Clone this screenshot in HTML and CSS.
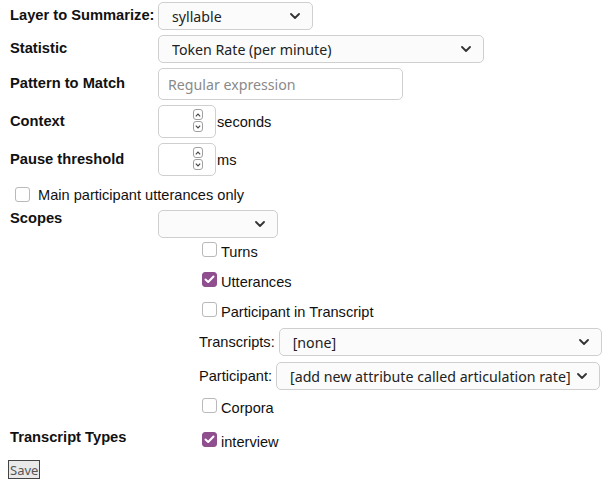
FILE: index.html
```html
<!DOCTYPE html>
<html>
<head>
<meta charset="utf-8">
<link rel="stylesheet" href="styles.css">
</head>
<body>
<form class="form">
  <div class="row">
    <label class="label">Layer to Summarize:</label>
    <select class="select w-layer"><option>syllable</option></select>
  </div>
  <div class="row">
    <label class="label">Statistic</label>
    <select class="select w-stat"><option>Token Rate (per minute)</option></select>
  </div>
  <div class="row">
    <label class="label">Pattern to Match</label>
    <input class="text-input" type="text" placeholder="Regular expression">
  </div>
  <div class="row">
    <label class="label">Context</label>
    <div class="num">
      <input class="num-input" type="number">
      <span class="spin">
        <span class="spin-btn"><svg width="6" height="4" viewBox="0 0 6 4"><path d="M0.8 3.3 L3 1 L5.2 3.3" fill="none" stroke="#444" stroke-width="1.1"/></svg></span>
        <span class="spin-btn"><svg width="6" height="4" viewBox="0 0 6 4"><path d="M0.8 0.7 L3 3 L5.2 0.7" fill="none" stroke="#444" stroke-width="1.1"/></svg></span>
      </span>
    </div>
    <span class="unit">seconds</span>
  </div>
  <div class="row">
    <label class="label">Pause threshold</label>
    <div class="num">
      <input class="num-input" type="number">
      <span class="spin">
        <span class="spin-btn"><svg width="6" height="4" viewBox="0 0 6 4"><path d="M0.8 3.3 L3 1 L5.2 3.3" fill="none" stroke="#444" stroke-width="1.1"/></svg></span>
        <span class="spin-btn"><svg width="6" height="4" viewBox="0 0 6 4"><path d="M0.8 0.7 L3 3 L5.2 0.7" fill="none" stroke="#444" stroke-width="1.1"/></svg></span>
      </span>
    </div>
    <span class="unit">ms</span>
  </div>
  <label class="main-check"><input class="cb" type="checkbox"><span>Main participant utterances only</span></label>
  <div class="row row-top scopes-row">
    <label class="label label-scopes">Scopes</label>
    <div class="scopes">
      <select class="select w-scope"><option></option></select>
      <div class="sublist">
        <label class="check"><input class="cb" type="checkbox"><span>Turns</span></label>
        <label class="check"><input class="cb" type="checkbox" checked><span>Utterances</span></label>
        <label class="check"><input class="cb" type="checkbox"><span>Participant in Transcript</span></label>
        <div class="attr-row attr-transcripts">
          <span class="attr-label">Transcripts:</span>
          <select class="select attr-select"><option>[none]</option></select>
        </div>
        <div class="attr-row attr-participant">
          <span class="attr-label">Participant:</span>
          <select class="select attr-select"><option>[add new attribute called articulation rate]</option></select>
        </div>
        <label class="check check-corpora"><input class="cb" type="checkbox"><span>Corpora</span></label>
      </div>
    </div>
  </div>
  <div class="row row-top types-row">
    <label class="label label-types">Transcript Types</label>
    <div class="types">
      <label class="check"><input class="cb" type="checkbox" checked><span>interview</span></label>
    </div>
  </div>
  <div class="actions">
    <button class="save" type="button">Save</button>
  </div>
</form>
</body>
</html>
```
FILE: styles.css
```css
html, body {
  margin: 0;
  padding: 0;
  background: #fff;
}
body {
  font-family: "Liberation Sans", Arial, sans-serif;
  font-size: 14.6px;
  color: #111;
}
.form {
  display: flex;
  flex-direction: column;
  padding: 2px 8px 0 8px;
}
.row {
  display: flex;
  align-items: center;
}
.row + .row {
  margin-top: 5px;
}
.row-top {
  align-items: flex-start;
}
.label {
  width: 150px;
  padding-left: 2px;
  box-sizing: border-box;
  font-weight: bold;
  font-size: 14.7px;
  padding-bottom: 2px;
  flex: none;
}
.select {
  appearance: none;
  -webkit-appearance: none;
  height: 28px;
  box-sizing: border-box;
  border: 1px solid #cfcfcf;
  border-radius: 5px;
  background-color: #fbfbfb;
  background-image: url("data:image/svg+xml,%3Csvg xmlns='http://www.w3.org/2000/svg' width='10' height='6' viewBox='0 0 10 6'%3E%3Cpath d='M1 1 L5 5 L9 1' fill='none' stroke='%23333' stroke-width='1.8' stroke-linecap='round' stroke-linejoin='round'/%3E%3C/svg%3E");
  background-repeat: no-repeat;
  background-position: right 12px center;
  background-size: 10px 6px;
  padding: 0 30px 0 13px;
  font-family: "Noto Sans", sans-serif;
  font-size: 14.2px;
  color: #222;
  margin: 0;
}
.w-layer { width: 155px; }
.w-stat { width: 326px; }
.w-scope { width: 120px; }
.text-input {
  width: 245px;
  height: 32px;
  box-sizing: border-box;
  border: 1px solid #cfcfcf;
  border-radius: 5px;
  padding: 0 9px;
  font-family: "Noto Sans", sans-serif;
  font-size: 14.2px;
  margin: 0;
}
.text-input::placeholder {
  color: #8a8a8a;
}
.num {
  width: 58px;
  height: 33px;
  box-sizing: border-box;
  border: 1px solid #cfcfcf;
  border-radius: 5px;
  display: flex;
  align-items: center;
  background: #fff;
}
.num-input {
  border: none;
  outline: none;
  width: 30px;
  flex: 1;
  min-width: 0;
  background: transparent;
  font-size: 14.4px;
  padding: 0 0 0 6px;
  -moz-appearance: textfield;
}
.num-input::-webkit-inner-spin-button,
.num-input::-webkit-outer-spin-button {
  -webkit-appearance: none;
  margin: 0;
}
.spin {
  display: flex;
  flex-direction: column;
  gap: 1px;
  margin-right: 12px;
  margin-top: -2px;
}
.spin-btn {
  width: 10px;
  height: 11px;
  box-sizing: border-box;
  border: 1px solid #a0a0a0;
  border-radius: 3px;
  display: flex;
  align-items: center;
  justify-content: center;
  background: #fff;
}
.unit {
  margin-left: 1px;
}
.cb {
  appearance: none;
  -webkit-appearance: none;
  width: 15px;
  height: 15px;
  box-sizing: border-box;
  border: 1px solid #b9b9b9;
  border-radius: 3px;
  background: #fff;
  margin: 0;
  flex: none;
}
.cb:checked {
  background-color: #8f4f8f;
  border-color: #8f4f8f;
  background-image: url("data:image/svg+xml,%3Csvg xmlns='http://www.w3.org/2000/svg' width='15' height='15' viewBox='0 0 15 15'%3E%3Cpath d='M3.5 7.5 L6.2 10 L11.5 4.5' fill='none' stroke='%23fff' stroke-width='2' stroke-linecap='round' stroke-linejoin='round'/%3E%3C/svg%3E");
  background-position: center;
  background-repeat: no-repeat;
}
.main-check {
  display: flex;
  align-items: flex-start;
  gap: 8px;
  margin-top: 10px;
  padding-left: 7px;
}
.main-check .cb {
  margin-top: 1px;
}
.main-check span {
  margin-top: 1px;
}
.scopes-row {
  margin-top: 7px;
}
.scopes {
  display: flex;
  flex-direction: column;
}
.sublist {
  display: flex;
  flex-direction: column;
  padding-left: 41px;
  width: 444px;
  box-sizing: border-box;
  margin-top: 4px;
}
.check {
  display: flex;
  align-items: flex-start;
  gap: 4px;
  padding-left: 3px;
}
.check span {
  margin-top: 2px;
}
.check + .check {
  margin-top: 12px;
}
.attr-row {
  display: flex;
  align-items: center;
  gap: 4px;
}
.attr-transcripts {
  margin-top: 8px;
}
.attr-participant {
  margin-top: 6px;
  padding-right: 2px;
}
.attr-select {
  flex: 1;
  min-width: 0;
  padding-right: 22px;
}
.check-corpora {
  margin-top: 8px;
}
.row.types-row {
  margin-top: 13px;
}
.label-types {
  margin-top: 0;
}
.types {
  padding-left: 41px;
  padding-top: 3px;
}
.actions {
  margin-top: 10px;
}
.save {
  font-family: "Noto Sans", sans-serif;
  font-size: 13px;
  color: #555;
  background: #e9e9e9;
  border: 1px solid #444;
  border-radius: 0;
  padding: 0 1px;
  height: 19px;
  line-height: 16px;
  margin: 0;
}
```
